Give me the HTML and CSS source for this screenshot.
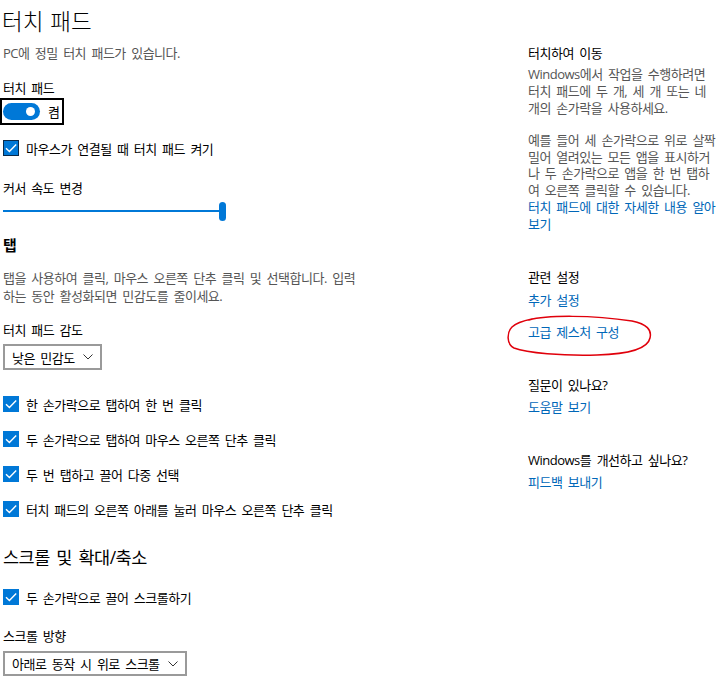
FILE: index.html
```html
<!DOCTYPE html>
<html lang="ko">
<head>
<meta charset="utf-8">
<title>터치 패드</title>
<link rel="stylesheet" href="styles.css">
</head>
<body>
<div class="page">
  <main class="left">
    <h1 class="title">터치 패드</h1>
    <p class="desc desc-top">PC에 정밀 터치 패드가 있습니다.</p>

    <div class="label label-touchpad">터치 패드</div>
    <div class="toggle-focus">
      <span class="pill"><span class="knob"></span></span>
      <span class="toggle-text">켬</span>
    </div>

    <label class="check check-first">
      <span class="box box-focus"><svg viewBox="0 0 16 16"><polyline points="3,8.2 6.4,11.6 13.2,4.6"/></svg></span>
      <span>마우스가 연결될 때 터치 패드 켜기</span>
    </label>

    <div class="label label-speed">커서 속도 변경</div>
    <div class="slider"><span class="track"></span><span class="thumb"></span></div>

    <h2 class="section section-tap">탭</h2>
    <p class="desc desc-tap">탭을 사용하여 클릭, 마우스 오른쪽 단추 클릭 및 선택합니다. 입력<br>하는 동안 활성화되면 민감도를 줄이세요.</p>

    <div class="label label-sens">터치 패드 감도</div>
    <div class="select"><span>낮은 민감도</span><svg class="chev" viewBox="0 0 10 6"><polyline points="0.5,0.5 5,5 9.5,0.5"/></svg></div>

    <div class="check-list">
      <label class="check">
        <span class="box"><svg viewBox="0 0 16 16"><polyline points="3,8.2 6.4,11.6 13.2,4.6"/></svg></span>
        <span>한 손가락으로 탭하여 한 번 클릭</span>
      </label>
      <label class="check">
        <span class="box"><svg viewBox="0 0 16 16"><polyline points="3,8.2 6.4,11.6 13.2,4.6"/></svg></span>
        <span>두 손가락으로 탭하여 마우스 오른쪽 단추 클릭</span>
      </label>
      <label class="check">
        <span class="box"><svg viewBox="0 0 16 16"><polyline points="3,8.2 6.4,11.6 13.2,4.6"/></svg></span>
        <span>두 번 탭하고 끌어 다중 선택</span>
      </label>
      <label class="check">
        <span class="box"><svg viewBox="0 0 16 16"><polyline points="3,8.2 6.4,11.6 13.2,4.6"/></svg></span>
        <span>터치 패드의 오른쪽 아래를 눌러 마우스 오른쪽 단추 클릭</span>
      </label>
    </div>

    <h2 class="section section-scroll">스크롤 및 확대/축소</h2>
    <label class="check check-scroll">
      <span class="box"><svg viewBox="0 0 16 16"><polyline points="3,8.2 6.4,11.6 13.2,4.6"/></svg></span>
      <span>두 손가락으로 끌어 스크롤하기</span>
    </label>

    <div class="label label-dir">스크롤 방향</div>
    <div class="select"><span>아래로 동작 시 위로 스크롤</span><svg class="chev" viewBox="0 0 10 6"><polyline points="0.5,0.5 5,5 9.5,0.5"/></svg></div>
  </main>

  <aside class="right">
    <div class="side-head side-first">터치하여 이동</div>
    <p class="side-text side-p1">Windows에서 작업을 수행하려면<br>터치 패드에 두 개, 세 개 또는 네<br>개의 손가락을 사용하세요.</p>
    <p class="side-text side-p2">예를 들어 세 손가락으로 위로 살짝<br>밀어 열려있는 모든 앱을 표시하거<br>나 두 손가락으로 앱을 한 번 탭하<br>여 오른쪽 클릭할 수 있습니다.</p>
    <a class="link link-more">터치 패드에 대한 자세한 내용 알아<br>보기</a>

    <div class="side-head side-related">관련 설정</div>
    <a class="link link-add">추가 설정</a>
    <div class="annot-wrap">
      <a class="link link-adv">고급 제스처 구성</a>
      <svg class="circle" viewBox="0 0 155 50"><path d="M27 10 C45 5, 90 5, 130 11 C145 14, 150 20, 148 28 C146 38, 130 44, 95 45 C60 46, 25 43, 12 38 C4 34, 5 22, 10 17 C14 13, 20 11, 30 9"/></svg>
    </div>

    <div class="side-head side-q">질문이 있나요?</div>
    <a class="link link-help">도움말 보기</a>

    <div class="side-head side-q">Windows를 개선하고 싶나요?</div>
    <a class="link link-help">피드백 보내기</a>
  </aside>
</div>
</body>
</html>
```
FILE: styles.css
```css
* { box-sizing: border-box; }
html, body { margin: 0; padding: 0; background: #fff; }
body {
  font-family: "Open Sans", "Noto Sans CJK KR", sans-serif;
  font-size: 13px;
  letter-spacing: -0.5px;
  word-spacing: 2.5px;
  color: #000;
}
p, h1, h2 { margin: 0; font-weight: normal; }

.page { display: flex; width: 720px; height: 692px; overflow: hidden; }
.left { width: 528px; padding-left: 3px; flex: none; }
.right { width: 192px; flex: none; }

.title {
  font-size: 22.5px;
  line-height: 30px;
  font-weight: 300;
  margin: 7px 0 0 -1px;
  letter-spacing: 0;
  word-spacing: 1px;
}
.desc { color: #555; line-height: 18px; }
.desc-top { margin-top: 7px; }

.label { line-height: 18px; }
.label-touchpad { margin-top: 17px; }

.toggle-focus {
  display: inline-flex;
  align-items: center;
  height: 27px;
  margin: 1px 0 0 -3px;
  border: 2px solid #000;
  padding: 0 3px 0 1px;
  gap: 8px;
}
.pill {
  width: 37px; height: 17px;
  border-radius: 9px;
  background: #0078d7;
  display: flex; align-items: center; justify-content: flex-end;
  padding-right: 5px;
}
.knob { width: 9px; height: 9px; border-radius: 50%; background: #fff; }

.check { display: flex; align-items: center; gap: 7px; height: 20px; }
.check-first { margin-top: 13px; }
.box {
  width: 16px; height: 16px; flex: none;
  background: #0078d7;
  display: flex;
}
.box svg { width: 16px; height: 16px; }
.box polyline { fill: none; stroke: #fff; stroke-width: 1.4; }
.box-focus { box-shadow: inset 0 0 0 1px #0a2a4a; }

.label-speed { margin-top: 21px; }
.slider { display: flex; align-items: center; height: 20px; margin-top: 4px; }
.track { width: 216px; height: 2px; background: #0078d7; }
.thumb { width: 7px; height: 19px; border-radius: 4px; background: #0078d7; }

.section { font-weight: bold; }
.section-tap { font-size: 15px; line-height: 20px; margin-top: 14px; }
.desc-tap { margin-top: 14px; }
.label-sens { margin-top: 16px; }

.select {
  display: inline-flex;
  align-items: center;
  height: 26px;
  margin-top: 5px;
  border: 2px solid #9a9a9a;
  padding: 0 7px 0 7px;
  gap: 8px;
}
.chev { width: 10px; height: 6px; }
.chev polyline { fill: none; stroke: #333; stroke-width: 1; }

.check-list { display: flex; flex-direction: column; gap: 15px; margin-top: 24px; }

.section-scroll { font-size: 17.5px; line-height: 24px; margin-top: 26px; font-weight: 400; }
.check-scroll { margin-top: 18px; }
.label-dir { margin-top: 20px; }
.label-dir + .select { margin-top: 6px; height: 25px; }

.right { padding-top: 44px; }
.side-head { line-height: 18px; display: block; }
.side-text { color: #555; line-height: 17px; }
.side-p1 { margin-top: 4px; }
.side-p2 { margin-top: 15px; line-height: 16.5px; }
.link { display: block; color: #0067b8; line-height: 18px; text-decoration: none; }
.link-more { margin-top: 1px; line-height: 16.5px; }
.side-related { margin-top: 36px; }
.link-add { margin-top: 5px; }
.annot-wrap { position: relative; margin-top: 14px; }
.circle {
  position: absolute;
  left: -26px; top: -13px;
  width: 155px; height: 50px;
  overflow: visible;
}
.circle path { fill: none; stroke: #e0000b; stroke-width: 1.5; stroke-linecap: round; }
.side-q { margin-top: 35px; }
.link-help { margin-top: 4px; }
```
